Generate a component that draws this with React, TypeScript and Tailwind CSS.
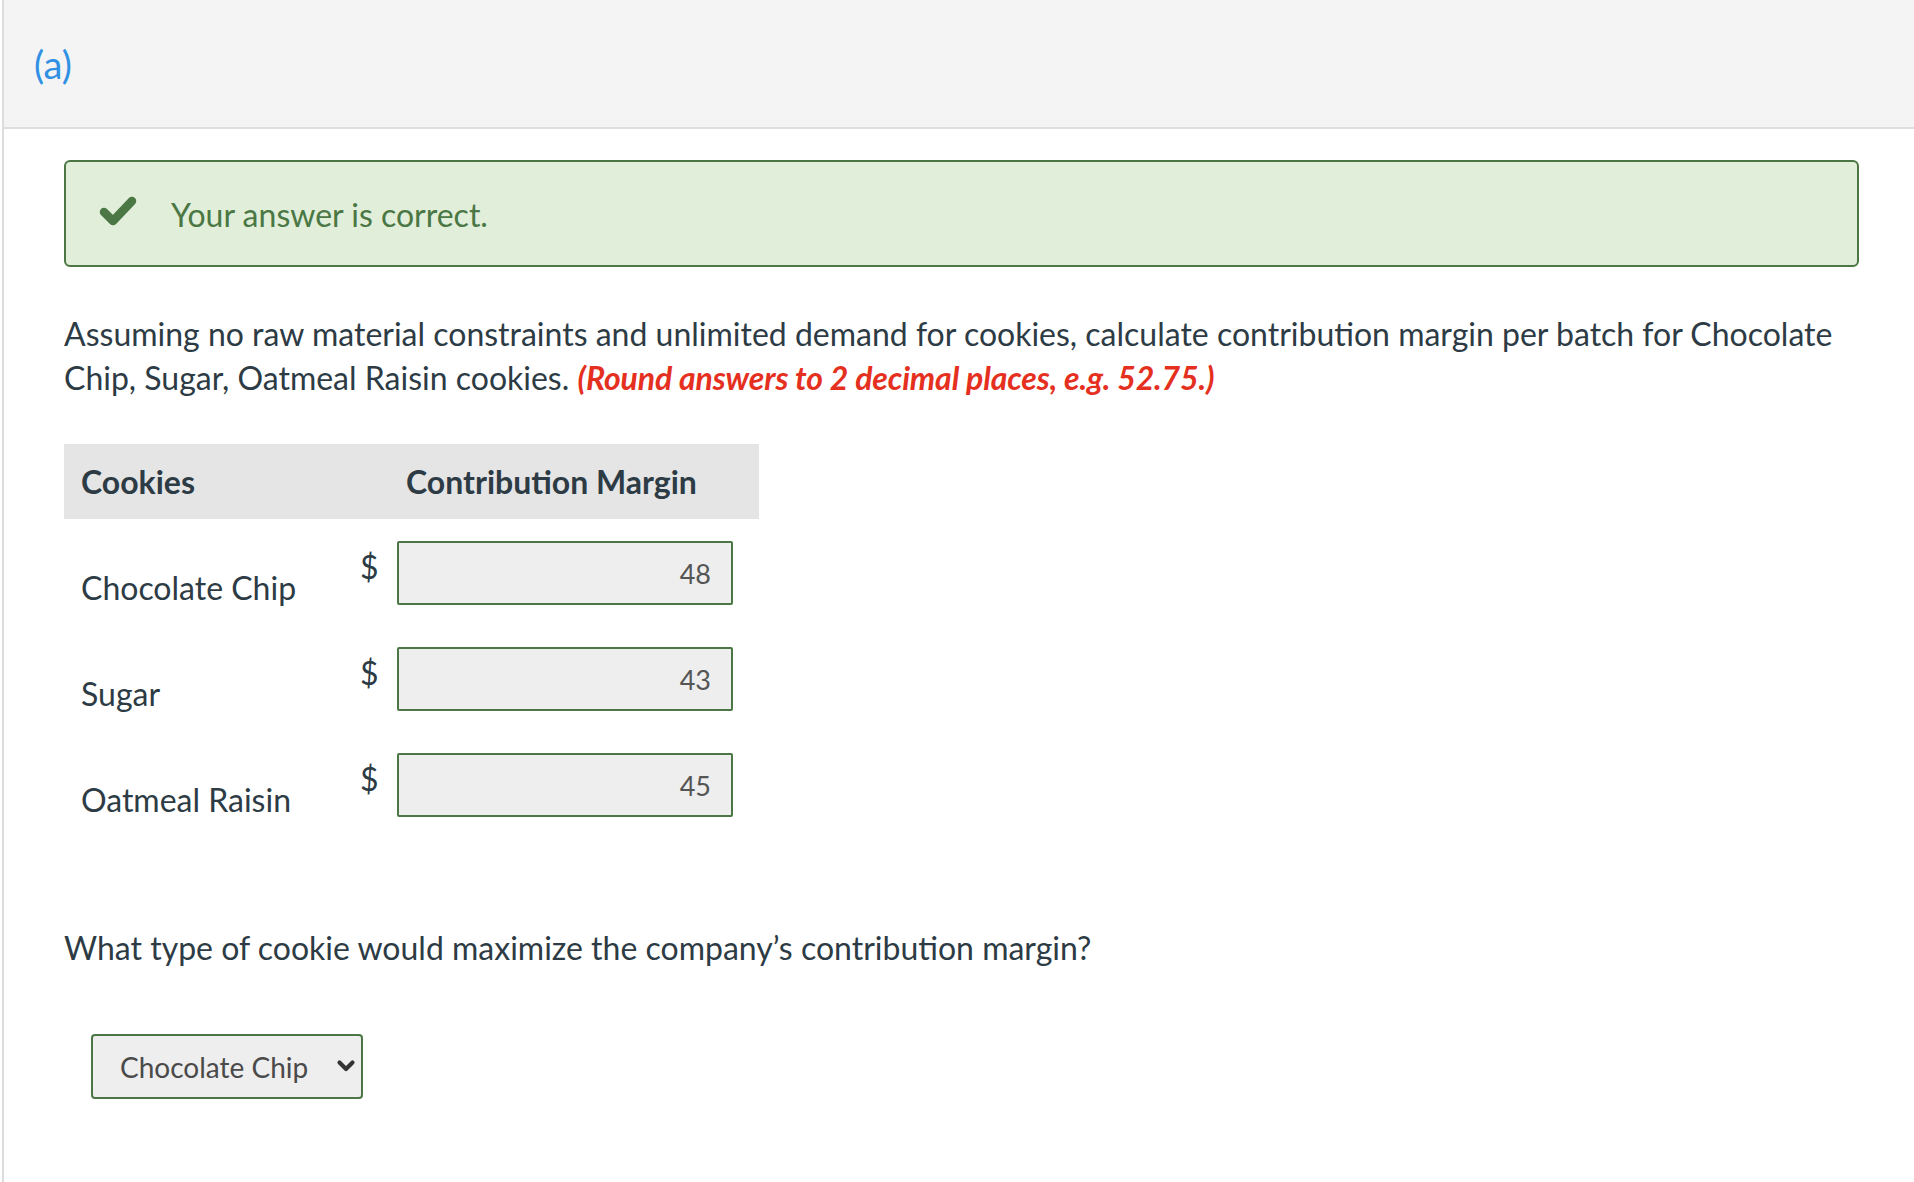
import React from 'react';

const rows = [
  { name: 'Chocolate Chip', value: '48' },
  { name: 'Sugar', value: '43' },
  { name: 'Oatmeal Raisin', value: '45' },
];

const CheckIcon = () => (
  <svg width="38" height="30" viewBox="0 0 38 30" aria-hidden="true">
    <polyline
      points="5,16 14,25 33,5"
      fill="none"
      stroke="#4a7744"
      strokeWidth="8.5"
      strokeLinecap="round"
      strokeLinejoin="round"
    />
  </svg>
);

export default function App() {
  return (
    <div className="min-h-screen bg-white font-['Lato','Liberation_Sans',sans-serif] text-[#2d3b45]">
      <div className="ml-[2px] min-h-screen border-l-2 border-[#dcdcdc]">
        {/* question part header */}
        <div className="flex h-[129px] items-center border-b-2 border-[#dedede] bg-[#f4f4f4] pl-[30px]">
          <span className="text-[38px] leading-none text-[#3090e3]">(a)</span>
        </div>

        <div className="pl-[60px] pr-[55px] pt-[31px]">
          {/* feedback banner */}
          <div className="flex h-[107px] items-center rounded-[6px] border-2 border-[#4a7744] bg-[#e1eed9] pl-[33px]">
            <div className="mb-[6px]">
              <CheckIcon />
            </div>
            <span className="ml-[34px] mt-[2px] text-[32px] leading-none text-[#4a7744]">
              Your answer is correct.
            </span>
          </div>

          {/* prompt */}
          <p className="mt-[45px] text-[32px] leading-[44px]">
            Assuming no raw material constraints and unlimited demand for cookies, calculate contribution margin per
            batch for Chocolate Chip, Sugar, Oatmeal Raisin cookies.{' '}
            <span className="font-bold italic tracking-[-0.12px] text-[#e5301f]">
              (Round answers to 2 decimal places, e.g. 52.75.)
            </span>
          </p>

          {/* table */}
          <div className="mt-[44px] w-[695px]">
            <div className="flex h-[75px] items-center bg-[#e5e5e5] text-[32px] font-bold">
              <div className="w-[280px] pl-[17px]">Cookies</div>
              <div className="pl-[62px]">Contribution Margin</div>
            </div>
            {rows.map((row) => (
              <div key={row.name} className="flex h-[106px] items-start">
                <div className="mt-[47px] w-[280px] pl-[17px] text-[32px] leading-[44px]">{row.name}</div>
                <div className="ml-[16px] mt-[26px] w-[37px] text-[32px] leading-[44px]">$</div>
                <input
                  readOnly
                  value={row.value}
                  className="mt-[22px] h-[64px] w-[336px] rounded-[2px] border-2 border-[#4a7744] bg-[#eeeeee] pr-[20px] text-right text-[27px] text-[#555555] outline-none"
                />
              </div>
            ))}
          </div>

          {/* second question */}
          <p className="mt-[89px] text-[32px] leading-[44px]">
            What type of cookie would maximize the company’s contribution margin?
          </p>

          <div className="relative ml-[27px] mt-[64px] h-[65px] w-[272px]">
            <select
              defaultValue="Chocolate Chip"
              className="h-full w-full appearance-none rounded-[4px] border-2 border-[#4a7744] bg-[#eeeeee] pl-[27px] text-[28px] text-[#4a4a4a] outline-none"
            >
              <option>Chocolate Chip</option>
              <option>Sugar</option>
              <option>Oatmeal Raisin</option>
            </select>
            <svg
              className="pointer-events-none absolute right-[7px] top-[25px]"
              width="20"
              height="14"
              viewBox="0 0 20 14"
              aria-hidden="true"
            >
              <polyline
                points="3.5,3.5 10,10 16.5,3.5"
                fill="none"
                stroke="#333333"
                strokeWidth="4.2"
                strokeLinecap="round"
                strokeLinejoin="round"
              />
            </svg>
          </div>
        </div>
      </div>
    </div>
  );
}
